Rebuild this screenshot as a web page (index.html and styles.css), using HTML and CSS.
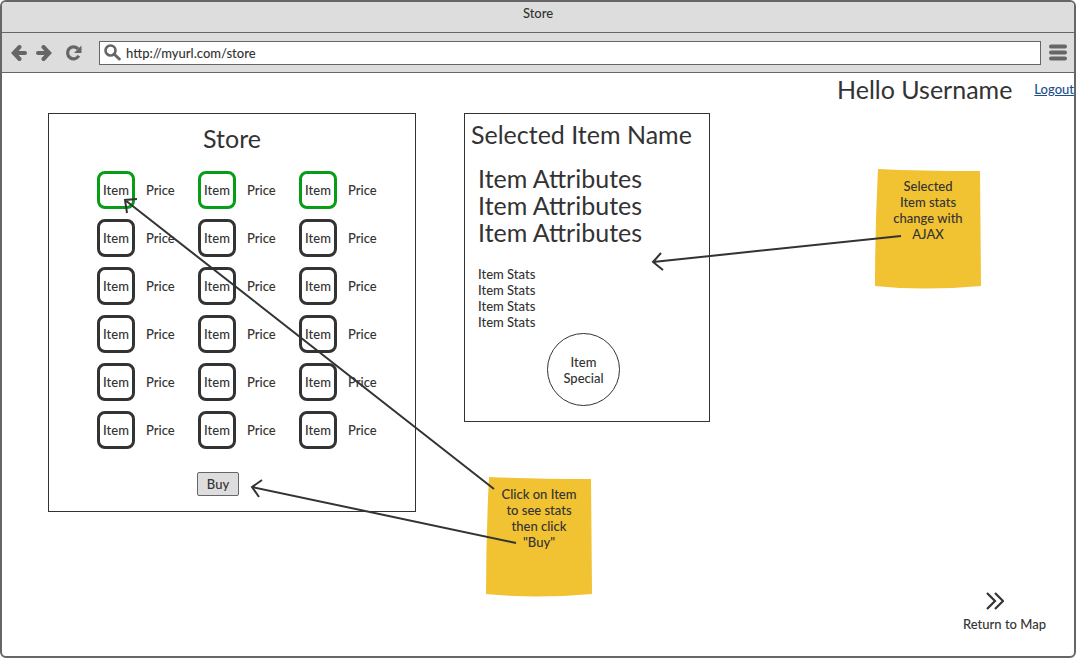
FILE: index.html
```html
<!DOCTYPE html>
<html lang="en">
<head>
<meta charset="utf-8">
<title>Store</title>
<link rel="stylesheet" href="styles.css">
</head>
<body>
<div class="window">
  <header class="titlebar">Store</header>
  <div class="toolbar">
    <button class="tool" aria-label="Back"><svg width="16" height="16" viewBox="0 0 16 16"><path d="M8.500 2 2.800 8l5.700 6M3 8h11" fill="none" stroke="#666" stroke-width="4" stroke-linecap="round"/></svg></button>
    <button class="tool" aria-label="Forward"><svg width="16" height="16" viewBox="0 0 16 16"><path d="M7.500 2 13.200 8l-5.700 6M13 8H2" fill="none" stroke="#666" stroke-width="4" stroke-linecap="round"/></svg></button>
    <button class="tool tool-reload" aria-label="Reload"><svg width="18" height="16" viewBox="0 0 18 16"><path d="M13.200 4A6 6 0 1 0 13.800 10.800" fill="none" stroke="#666" stroke-width="3.200"/><path d="M16.500 .5V8H9z" fill="#666"/></svg></button>
    <div class="address">
      <svg width="17" height="17" viewBox="0 0 17 17"><circle cx="6.500" cy="6.500" r="5" fill="none" stroke="#666" stroke-width="2.600"/><path d="m10 10 5.300 5" stroke="#666" stroke-width="3" stroke-linecap="round"/></svg>
      <input class="address-input" type="text" aria-label="Address" value="http://myurl.com/store">
    </div>
    <button class="tool tool-menu" aria-label="Menu"><svg width="18" height="17" viewBox="0 0 18 17"><path d="M2 2.500h14M2 8.500h14M2 14.500h14" stroke="#666" stroke-width="4" stroke-linecap="round"/></svg></button>
  </div>

  <main class="page">
    <div class="userbar">
      <span class="heading">Hello Username</span>
      <a class="logout" href="#">Logout</a>
    </div>
    <div class="panels">
      <section class="panel store">
        <h1 class="heading store-title">Store</h1>
        <ul class="items">
          <li class="item"><button class="slot slot-owned">Item</button><span>Price</span></li>
          <li class="item"><button class="slot slot-owned">Item</button><span>Price</span></li>
          <li class="item"><button class="slot slot-owned">Item</button><span>Price</span></li>
          <li class="item"><button class="slot">Item</button><span>Price</span></li>
          <li class="item"><button class="slot">Item</button><span>Price</span></li>
          <li class="item"><button class="slot">Item</button><span>Price</span></li>
          <li class="item"><button class="slot">Item</button><span>Price</span></li>
          <li class="item"><button class="slot">Item</button><span>Price</span></li>
          <li class="item"><button class="slot">Item</button><span>Price</span></li>
          <li class="item"><button class="slot">Item</button><span>Price</span></li>
          <li class="item"><button class="slot">Item</button><span>Price</span></li>
          <li class="item"><button class="slot">Item</button><span>Price</span></li>
          <li class="item"><button class="slot">Item</button><span>Price</span></li>
          <li class="item"><button class="slot">Item</button><span>Price</span></li>
          <li class="item"><button class="slot">Item</button><span>Price</span></li>
          <li class="item"><button class="slot">Item</button><span>Price</span></li>
          <li class="item"><button class="slot">Item</button><span>Price</span></li>
          <li class="item"><button class="slot">Item</button><span>Price</span></li>
        </ul>
        <button class="buy">Buy</button>
      </section>
      <section class="panel detail">
        <h2 class="heading">Selected Item Name</h2>
        <ul class="attributes heading">
          <li>Item Attributes</li>
          <li>Item Attributes</li>
          <li>Item Attributes</li>
        </ul>
        <ul class="stats">
          <li>Item Stats</li>
          <li>Item Stats</li>
          <li>Item Stats</li>
          <li>Item Stats</li>
        </ul>
        <div class="special">Item<br>Special</div>
      </section>
    </div>
    <a class="map-link" href="#">
      <svg class="map-icon" width="18" height="18" viewBox="0 0 18 18"><path d="m1 1 8 8-8 8M9 1l8 8-8 8" fill="none" stroke="#333" stroke-width="2.200"/></svg>
      <span>Return to Map</span>
    </a>
  </main>
</div>

<aside class="note note-ajax">
  <svg class="note-paper" viewBox="0 0 106 120" preserveAspectRatio="none"><path d="M3 0 Q45 2 105 2 L106 117 Q48 122 0 117 Q0 60 3 0Z" fill="#f1c232"/></svg>
  <p class="note-text">Selected<br>Item stats<br>change with<br>AJAX</p>
</aside>
<aside class="note note-buy">
  <svg class="note-paper" viewBox="0 0 106 120" preserveAspectRatio="none"><path d="M3 0 Q45 2 105 2 L106 117 Q48 122 0 117 Q0 60 3 0Z" fill="#f1c232"/></svg>
  <p class="note-text">Click on Item<br>to see stats<br>then click<br>"Buy"</p>
</aside>
<svg class="arrows" width="1076" height="658" viewBox="0 0 1076 658" fill="none" stroke="#333" stroke-width="2">
  <path d="M494 489 125 200M127 213l-2-13 12-1"/>
  <path d="M516 543 252 487M262 480l-10 7 7 10"/>
  <path d="M901 236 653 262M661 253l-8 9 10 8"/>
</svg>
</body>
</html>
```
FILE: styles.css
```css
* { box-sizing: border-box; }

body {
  margin: 0;
  position: relative;
  background: #fff;
  color: #333;
  font: 500 13px/16px Lato, "Open Sans", sans-serif;
}

button, input { font: inherit; color: inherit; }
button { padding: 0; cursor: pointer; }
ul { margin: 0; padding: 0; list-style: none; }
svg { display: block; flex: none; }

.window {
  display: flex;
  flex-direction: column;
  min-height: 100vh;
  border: 2px solid #666;
  border-radius: 6px;
  overflow: hidden;
}

.titlebar {
  height: 31px;
  padding-top: 3px;
  background: #ddd;
  border-bottom: 1px solid #666;
  text-align: center;
}

.toolbar {
  display: flex;
  align-items: center;
  gap: 9px;
  height: 40px;
  padding: 0 7px 0 9px;
  background: #ddd;
  border-bottom: 1px solid #666;
}
.tool { border: 0; background: none; }
.tool-reload { margin-left: 4px; }
.tool-menu { margin-left: -1px; }

.address {
  flex: 1;
  display: flex;
  align-items: center;
  gap: 5px;
  height: 24px;
  margin-left: 7px;
  padding-left: 4px;
  background: #fff;
  border: 1px solid #666;
}
.address-input {
  flex: 1;
  min-width: 0;
  padding: 0;
  border: 0;
  outline: 0;
  background: none;
}

.page {
  flex: 1;
  display: flex;
  flex-direction: column;
}

.heading {
  margin: 0;
  font-size: 25px;
  font-weight: 400;
  line-height: 27px;
}

.userbar {
  display: flex;
  justify-content: flex-end;
  align-items: center;
  gap: 22px;
  height: 40px;
  padding-bottom: 8px;
}
.logout { color: #1c4f8c; }

.panels {
  display: flex;
  align-items: flex-start;
  gap: 48px;
  padding: 0 46px;
}
.panel { border: 1px solid #333; }

.store {
  width: 368px;
  padding: 11px 0 15px;
}
.store-title { text-align: center; }

.items {
  display: grid;
  grid-template-columns: repeat(3, 101px);
  row-gap: 10px;
  margin-top: 19px;
  padding-left: 48px;
}
.item {
  display: flex;
  align-items: center;
  gap: 11px;
}
.slot {
  width: 38px;
  height: 38px;
  border: 3px solid #333;
  border-radius: 8px;
  background: none;
}
.slot-owned { border-color: #079d16; }

.buy {
  display: block;
  width: 42px;
  height: 24px;
  margin: 23px 0 0 148px;
  padding-bottom: 1px;
  background: #ddd;
  border: 1px solid #666;
  border-radius: 2px;
}

.detail {
  width: 246px;
  padding: 7px 0 15px 6px;
}
.attributes { padding: 17px 0 0 7px; }
.stats { padding: 20px 0 0 7px; }
.special {
  display: flex;
  align-items: center;
  justify-content: center;
  width: 73px;
  height: 73px;
  margin: 3px 0 0 76px;
  border: 1px solid #333;
  border-radius: 50%;
  text-align: center;
}

.map-link {
  display: flex;
  flex-direction: column;
  align-items: center;
  align-self: flex-end;
  gap: 6px;
  margin-top: auto;
  padding: 0 28px 24px 0;
  color: inherit;
  text-decoration: none;
}
.map-icon { margin-right: 20px; }

/* Annotations placed freely over the mockup */
.note {
  position: absolute;
  width: 106px;
  height: 120px;
}
.note-ajax { left: 875px; top: 169px; }
.note-buy { left: 486px; top: 477px; }
.note-paper {
  position: absolute;
  inset: 0;
  width: 100%;
  height: 100%;
}
.note-text {
  position: relative;
  margin: 0;
  padding-top: 9px;
  text-align: center;
}
.arrows {
  position: absolute;
  left: 0;
  top: 0;
  pointer-events: none;
}
```
